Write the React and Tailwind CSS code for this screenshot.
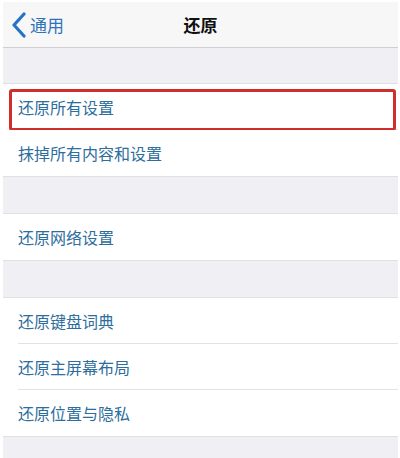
import React from "react";

const font = { fontFamily: '"Noto Sans CJK SC", "Noto Sans", sans-serif' };

function Row({ label, sep = true, highlight = false }) {
  return (
    <div className="relative h-[46px] bg-white flex items-center">
      <span className="pl-[15px] text-[16px] text-[#2d6e9d] leading-none">{label}</span>
      {sep && <div className="absolute left-[15px] right-0 bottom-0 h-px bg-[#e2e2e6]" />}
      {highlight && (
        <div className="absolute left-[6px] top-[5px] w-[387px] h-[42px] border-[3.5px] border-[#cf2f2c] rounded-[3px]" />
      )}
    </div>
  );
}

function Gap({ h }) {
  return <div className={`bg-[#efeff4] border-y border-[#e0e0e4] ${h}`} />;
}

export default function App() {
  return (
    <div className="w-[400px] h-[458px] bg-white pt-[2px] pl-[3px] pr-[2px] overflow-hidden" style={font}>
      <div className="h-[46px] bg-[#f7f7f8] border-b border-[#cfcfd3] relative flex items-center">
        <div className="flex items-center pl-[8px]">
          <svg width="15" height="26" viewBox="0 0 15 26" className="mr-[4px]">
            <polyline points="13,2 3,13 13,24" fill="none" stroke="#2373c6" strokeWidth="3.2" strokeLinecap="round" strokeLinejoin="round" />
          </svg>
          <span className="text-[17px] text-[#2f72b8] leading-none">通用</span>
        </div>
        <div className="absolute inset-0 flex items-center justify-center pointer-events-none">
          <span className="text-[17px] font-bold text-[#111] leading-none">还原</span>
        </div>
      </div>
      <div className="h-[36px] bg-[#efeff4] border-b border-[#e0e0e4]" />
      <Row label="还原所有设置" highlight />
      <Row label="抹掉所有内容和设置" sep={false} />
      <Gap h="h-[38px]" />
      <Row label="还原网络设置" sep={false} />
      <Gap h="h-[38px]" />
      <Row label="还原键盘词典" />
      <Row label="还原主屏幕布局" />
      <Row label="还原位置与隐私" sep={false} />
      <div className="h-[22px] bg-[#efeff4] border-t border-[#e0e0e4]" />
    </div>
  );
}
